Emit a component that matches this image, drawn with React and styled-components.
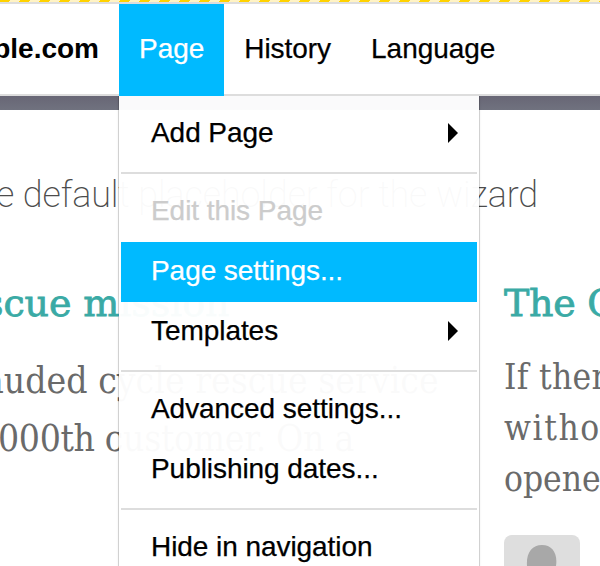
import React from "react";
import styled, { createGlobalStyle } from "styled-components";

const GlobalStyle = createGlobalStyle`
  * { box-sizing: border-box; }
  body { margin: 0; background: #fff; overflow: hidden; }
`;

const Screen = styled.div`
  position: relative;
  width: 600px;
  height: 566px;
  overflow: hidden;
  background: #fff;
  font-family: "Liberation Sans", Arial, sans-serif;
`;

const WarningStripe = styled.div`
  height: 4px;
  border-bottom: 2px solid #dddddd;
  background: repeating-linear-gradient(118deg, #ffd200 0 8.83px, #fff3c4 8.83px 17.66px);
`;

const Toolbar = styled.nav`
  display: flex;
  height: 92px;
  border-bottom: 2px solid #dddddd;
  background: #fff;
`;

const SiteName = styled.div`
  display: flex;
  flex: 0 0 119px;
  justify-content: flex-end;
  padding-right: 20px;
  overflow: hidden;
  font-size: 28px;
  font-weight: 700;
  line-height: 90px;
  white-space: nowrap;
`;

const ToolbarItem = styled.div`
  height: 92px;
  padding: 0 20px;
  font-size: 28px;
  line-height: 90px;
  letter-spacing: -0.04px;
  color: ${(p) => (p.$active ? "#fff" : "#000")};
  background: ${(p) => (p.$active ? "#00baff" : "transparent")};
  -webkit-text-stroke: 0.25px currentColor;
`;

const HeroBand = styled.div`
  height: 14px;
  background: linear-gradient(#686675, #70727f);
`;

const Tagline = styled.p`
  height: 60px;
  margin: 55px 0 0 -4px;
  font-family: Roboto, sans-serif;
  font-size: 36px;
  font-weight: 200;
  line-height: 60px;
  letter-spacing: -0.12px;
  color: #4c4c4c;
  white-space: nowrap;
`;

const Columns = styled.div`
  display: grid;
  grid-template-columns: 504px 300px;
  margin-top: 48px;
`;

const Column = styled.article`
  min-width: 0;
  white-space: nowrap;
`;

const Title = styled.h2`
  height: 60px;
  margin: 0 0 0 ${(p) => p.$shift || "0"};
  font-family: "DejaVu Serif", serif;
  font-size: 38px;
  font-weight: 400;
  line-height: 60px;
  letter-spacing: ${(p) => p.$spacing};
  color: #3aaaa5;
  -webkit-text-stroke: 0.8px #3aaaa5;
`;

const Line = styled.p`
  height: ${(p) => p.$height};
  margin: 0 0 0 ${(p) => p.$shift || "0"};
  font-family: "DejaVu Serif Condensed", "DejaVu Serif", serif;
  font-stretch: condensed;
  font-size: ${(p) => p.$size};
  line-height: ${(p) => p.$height};
  letter-spacing: ${(p) => p.$spacing || "0"};
  color: #6a6a6a;
`;

const Copy = styled.div`
  padding-top: ${(p) => p.$top};
`;

const Avatar = styled.svg`
  display: block;
  width: 76px;
  height: 76px;
  margin-top: 30px;
`;

const Menu = styled.div`
  position: absolute;
  z-index: 2;
  top: 96px;
  left: 119px;
  width: 360px;
  height: 500px;
  padding: 8px 2px;
  background: rgba(255, 255, 255, 0.97);
  box-shadow: 0 0 0 1px rgba(0, 0, 0, 0.14), 0 1px 3px rgba(0, 0, 0, 0.12);
  clip-path: inset(0 -4px 0 -4px);
`;

const MenuItem = styled.div`
  display: flex;
  align-items: center;
  justify-content: space-between;
  height: 60px;
  padding: 0 19px 2px 30px;
  font-size: 28px;
  line-height: 58px;
  white-space: nowrap;
  letter-spacing: -0.06px;
  color: ${(p) => (p.$active ? "#fff" : p.$disabled ? "#ccc" : "#000")};
  background: ${(p) => (p.$active ? "#00baff" : "transparent")};
  -webkit-text-stroke: 0.25px currentColor;
`;

const Separator = styled.div`
  height: 2px;
  margin: 8px 0;
  background: #dddddd;
`;

const Arrow = () => (
  <svg width="10" height="20" viewBox="0 0 10 20">
    <path d="M0 0L10 10L0 20Z" fill="#000" />
  </svg>
);

export default function App() {
  return (
    <Screen>
      <GlobalStyle />
      <WarningStripe />
      <Toolbar>
        <SiteName>example.com</SiteName>
        <ToolbarItem $active>Page</ToolbarItem>
        <ToolbarItem>History</ToolbarItem>
        <ToolbarItem>Language</ToolbarItem>
      </Toolbar>
      <HeroBand />
      <Tagline>e default placeholder for the wizard</Tagline>
      <Columns>
        <Column>
          <Title $shift="-16px" $spacing="-0.1px">scue mission</Title>
          <Copy $top="19px">
            <Line $height="58px" $size="37px" $shift="-16px">auded cycle rescue service</Line>
            <Line $height="58px" $size="37px" $shift="-2px" $spacing="-0.35px">000th customer. On a</Line>
          </Copy>
        </Column>
        <Column>
          <Title $spacing="-0.3px">The Cycle</Title>
          <Copy $top="19px">
            <Line $height="51px" $size="35px" $spacing="0.3px">If there is</Line>
            <Line $height="51px" $size="35px" $spacing="1.6px">without</Line>
            <Line $height="51px" $size="35px">opened</Line>
          </Copy>
          <Avatar viewBox="0 0 76 76">
            <rect width="76" height="76" rx="8" fill="#dedede" />
            <path d="M23 31C22 18 28 10 38 10C48 10 54 18 52 31C51 43 46 50 38 50C29 50 24 43 23 31Z" fill="#a8a8a8" />
          </Avatar>
        </Column>
      </Columns>
      <Menu>
        <MenuItem>Add Page<Arrow /></MenuItem>
        <Separator />
        <MenuItem $disabled>Edit this Page</MenuItem>
        <MenuItem $active>Page settings...</MenuItem>
        <MenuItem>Templates<Arrow /></MenuItem>
        <Separator />
        <MenuItem>Advanced settings...</MenuItem>
        <MenuItem>Publishing dates...</MenuItem>
        <Separator />
        <MenuItem>Hide in navigation</MenuItem>
      </Menu>
    </Screen>
  );
}
